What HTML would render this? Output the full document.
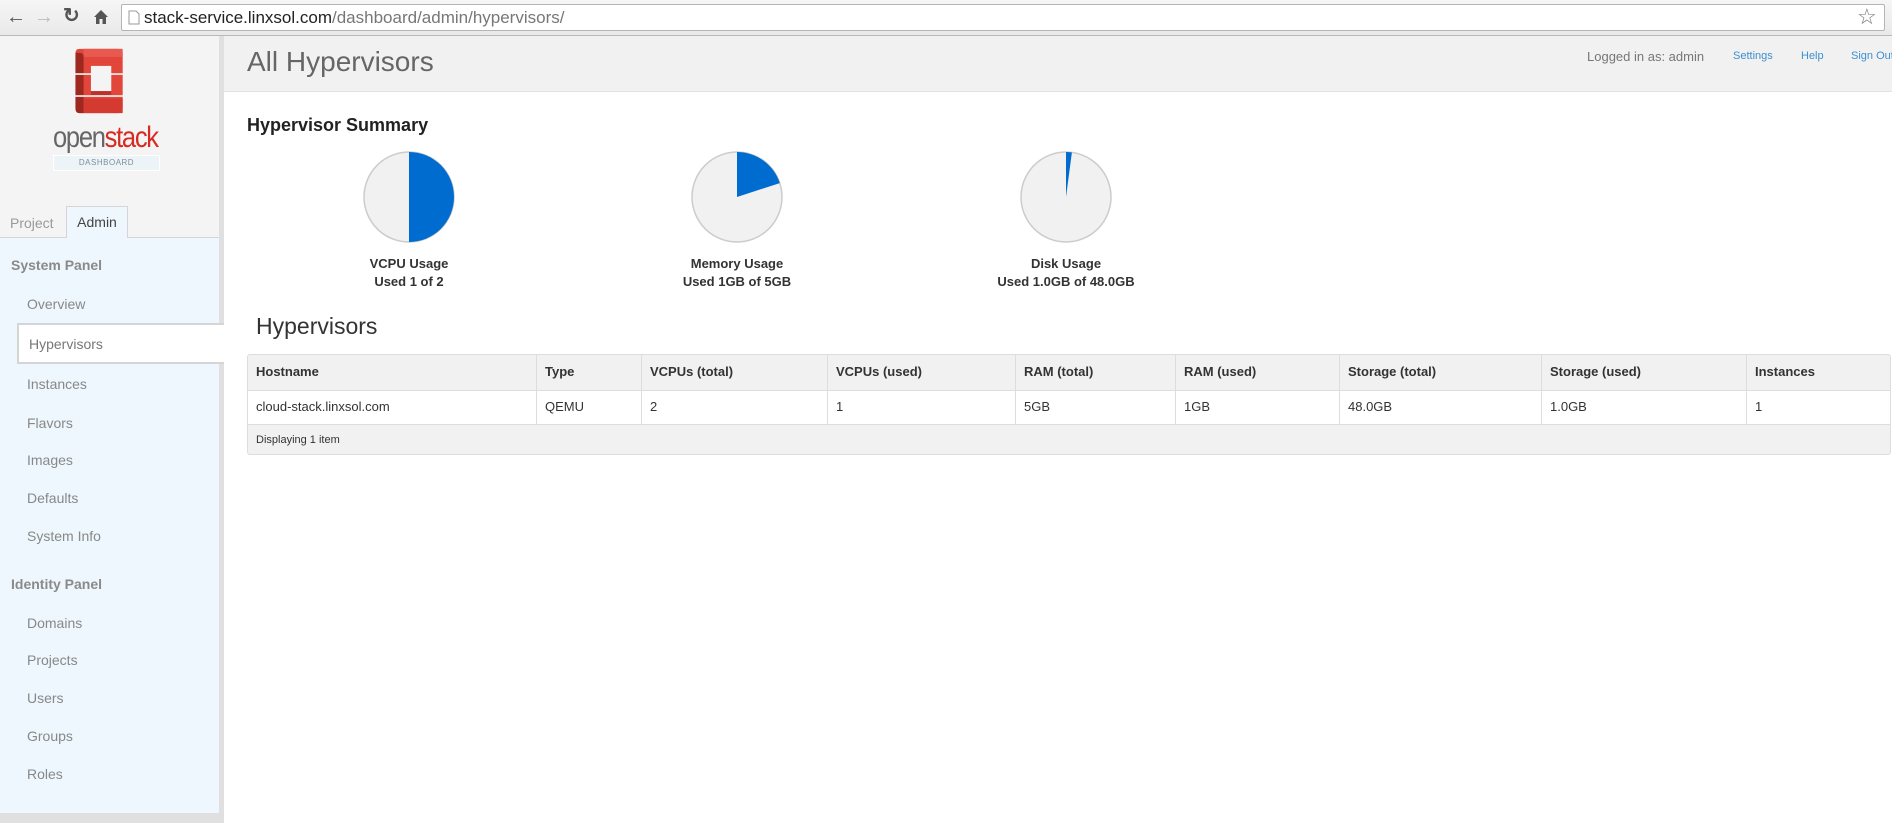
<!DOCTYPE html>
<html><head><meta charset="utf-8"><style>
*{margin:0;padding:0;box-sizing:border-box}
body{width:1892px;height:823px;overflow:hidden;font-family:"Liberation Sans",Arial,sans-serif;background:#fff;position:relative;color:#333}
.abs{position:absolute;white-space:nowrap}
.chrome{left:0;top:0;width:1892px;height:36px;background:linear-gradient(#f6f6f6,#e9e9e9);border-bottom:1px solid #b8b8b8}
.url{left:121px;top:4px;width:1764px;height:27px;background:#fff;border:1px solid #b5b5b5;border-radius:2px;font-size:17px;line-height:25px;padding-left:22px;color:#222}
.url span{color:#777}
.side{left:0;top:36px;width:219px;height:787px;background:#f4f4f4}
.sideblue{left:0;top:237px;width:219px;height:578px;background:#edf7fd;border-top:1px solid #d5d5d5}
.sideborder{left:219px;top:36px;width:5px;height:787px;background:#e0e0e0}
.hdr{left:224px;top:36px;width:1668px;height:56px;background:#f1f1f1;border-bottom:1px solid #e2e2e2}
.nav{font-size:14px;color:#888;left:27px}
.sec{font-size:14px;font-weight:bold;color:#8a8a8a;left:11px}
.th{font-size:13px;font-weight:bold;color:#333}
.td{font-size:13px;color:#333}
.lbl{font-size:13px;font-weight:bold;color:#333;text-align:center;width:200px;line-height:18px}
</style></head><body>
<div class="abs chrome"></div>
<div class="abs" style="left:6px;top:7px;font-size:20px;color:#555;line-height:20px">&#8592;</div>
<div class="abs" style="left:34px;top:7px;font-size:20px;color:#bbb;line-height:20px">&#8594;</div>
<div class="abs" style="left:63px;top:6px;font-size:20px;color:#555;line-height:20px;font-weight:bold">&#8635;</div>
<svg class="abs" style="left:93px;top:9px" width="16" height="16" viewBox="0 0 16 16"><path d="M1 8 L8 1 L15 8 H13 V15 H9.5 V10 H6.5 V15 H3 V8Z" fill="#555"/></svg>
<div class="abs url">stack-service.linxsol.com<span>/dashboard/admin/hypervisors/</span></div>
<svg class="abs" style="left:128px;top:10px" width="12" height="15"><path d="M1 1H8L11 4V14H1Z" fill="#fff" stroke="#999"/></svg>
<div class="abs" style="left:1857px;top:4px;font-size:22px;color:#777">&#9734;</div>

<div class="abs side"></div>
<div class="abs sideblue"></div>
<div class="abs sideborder"></div>
<!-- logo -->
<svg class="abs" style="left:64px;top:48px" width="62" height="70" viewBox="0 0 76 86">
<path d="M14 6 Q14 1 19 1 H66 Q72 1 72 6 V74 Q72 80 66 80 H19 Q14 80 14 74Z" fill="#e2463a"/>
<path d="M14 6 V74 Q14 80 19 80 H24 V10 Q24 6 19 6Z" fill="#9e2820"/>
<rect x="33" y="22" width="25" height="31" fill="#f4f4f4"/>
<rect x="33" y="53" width="25" height="5" fill="#b9332a"/>
<rect x="14" y="31" width="58" height="2" fill="#f4f4f4"/>
<rect x="14" y="58" width="58" height="2" fill="#f4f4f4"/>
<rect x="24" y="62" width="48" height="18" fill="#d43a2f"/>
<rect x="24" y="1" width="48" height="10" fill="#e85a4f"/>
</svg>
<div class="abs" style="left:53px;top:121px;font-size:30px;letter-spacing:-1.5px;transform:scaleX(0.85);transform-origin:left;line-height:34px"><span style="color:#666">open</span><span style="color:#d72b22">stack</span></div>
<div class="abs" style="left:53px;top:155px;width:107px;height:16px;background:#edf4f8;border:1px solid #fff;font-size:8px;color:#7d8e99;text-align:center;line-height:14px;letter-spacing:0.5px">DASHBOARD</div>
<!-- tabs -->
<div class="abs" style="left:10px;top:215px;font-size:14px;color:#999">Project</div>
<div class="abs" style="left:66px;top:206px;width:62px;height:32px;background:#edf7fd;border:1px solid #d5d5d5;border-bottom:none;font-size:14px;color:#444;text-align:center;line-height:30px">Admin</div>
<div class="abs sec" style="top:257px">System Panel</div>
<div class="abs nav" style="top:296px">Overview</div>
<div class="abs" style="left:17px;top:323px;width:207px;height:41px;background:#fff;border:2px solid #d5d5d5;border-right:none"></div>
<div class="abs nav" style="left:29px;top:336px;color:#777">Hypervisors</div>
<div class="abs nav" style="top:376px">Instances</div>
<div class="abs nav" style="top:415px">Flavors</div>
<div class="abs nav" style="top:452px">Images</div>
<div class="abs nav" style="top:490px">Defaults</div>
<div class="abs nav" style="top:528px">System Info</div>
<div class="abs sec" style="top:576px">Identity Panel</div>
<div class="abs nav" style="top:615px">Domains</div>
<div class="abs nav" style="top:652px">Projects</div>
<div class="abs nav" style="top:690px">Users</div>
<div class="abs nav" style="top:728px">Groups</div>
<div class="abs nav" style="top:766px">Roles</div>
<div class="abs" style="left:0;top:813px;width:224px;height:10px;background:#e0e0e0"></div>

<div class="abs hdr"></div>
<div class="abs" style="left:247px;top:45px;font-size:28px;color:#666;line-height:34px">All Hypervisors</div>
<div class="abs" style="left:1587px;top:49px;font-size:13px;color:#777">Logged in as: admin</div>
<div class="abs" style="left:1733px;top:50px;font-size:11px;color:#3d8fd1">Settings</div>
<div class="abs" style="left:1801px;top:50px;font-size:11px;color:#3d8fd1">Help</div>
<div class="abs" style="left:1851px;top:50px;font-size:11px;color:#3d8fd1">Sign Out</div>

<div class="abs" style="left:247px;top:115px;font-size:18px;font-weight:bold;color:#222">Hypervisor Summary</div>
<svg class="abs" style="left:355px;top:145px" width="110" height="106">
<ellipse cx="54" cy="52" rx="45" ry="45" fill="#f1f1f1" stroke="#ccc" stroke-width="1.5"/>
<path d="M54 7 A45 45 0 0 1 54 97Z" fill="#006ccf"/>
</svg>
<svg class="abs" style="left:683px;top:145px" width="110" height="106">
<circle cx="54" cy="52" r="45" fill="#f1f1f1" stroke="#ccc" stroke-width="1.5"/>
<path d="M54 52 L54 7 A45 45 0 0 1 96.8 38.1Z" fill="#006ccf"/>
</svg>
<svg class="abs" style="left:1012px;top:145px" width="110" height="106">
<circle cx="54" cy="52" r="45" fill="#f1f1f1" stroke="#ccc" stroke-width="1.5"/>
<path d="M54 52 L54 7 A45 45 0 0 1 59.9 7.4Z" fill="#006ccf"/>
</svg>
<div class="abs lbl" style="left:309px;top:255px">VCPU Usage<br>Used 1 of 2</div>
<div class="abs lbl" style="left:637px;top:255px">Memory Usage<br>Used 1GB of 5GB</div>
<div class="abs lbl" style="left:966px;top:255px">Disk Usage<br>Used 1.0GB of 48.0GB</div>

<div class="abs" style="left:256px;top:313px;font-size:23px;color:#333">Hypervisors</div>
<div class="abs" style="left:247px;top:354px;width:1644px;height:101px;border:1px solid #ddd;border-radius:3px;background:#f1f1f1;overflow:hidden">
  <div class="abs" style="left:0;top:35px;width:1644px;height:35px;background:#fff;border-top:1px solid #ddd;border-bottom:1px solid #ddd"></div>
</div>
<div class="abs" style="left:536px;top:355px;width:1px;height:69px;background:#ddd"></div>
<div class="abs" style="left:641px;top:355px;width:1px;height:69px;background:#ddd"></div>
<div class="abs" style="left:827px;top:355px;width:1px;height:69px;background:#ddd"></div>
<div class="abs" style="left:1015px;top:355px;width:1px;height:69px;background:#ddd"></div>
<div class="abs" style="left:1175px;top:355px;width:1px;height:69px;background:#ddd"></div>
<div class="abs" style="left:1339px;top:355px;width:1px;height:69px;background:#ddd"></div>
<div class="abs" style="left:1541px;top:355px;width:1px;height:69px;background:#ddd"></div>
<div class="abs" style="left:1746px;top:355px;width:1px;height:69px;background:#ddd"></div>
<div class="abs th" style="left:256px;top:364px">Hostname</div>
<div class="abs th" style="left:545px;top:364px">Type</div>
<div class="abs th" style="left:650px;top:364px">VCPUs (total)</div>
<div class="abs th" style="left:836px;top:364px">VCPUs (used)</div>
<div class="abs th" style="left:1024px;top:364px">RAM (total)</div>
<div class="abs th" style="left:1184px;top:364px">RAM (used)</div>
<div class="abs th" style="left:1348px;top:364px">Storage (total)</div>
<div class="abs th" style="left:1550px;top:364px">Storage (used)</div>
<div class="abs th" style="left:1755px;top:364px">Instances</div>
<div class="abs td" style="left:256px;top:399px">cloud-stack.linxsol.com</div>
<div class="abs td" style="left:545px;top:399px">QEMU</div>
<div class="abs td" style="left:650px;top:399px">2</div>
<div class="abs td" style="left:836px;top:399px">1</div>
<div class="abs td" style="left:1024px;top:399px">5GB</div>
<div class="abs td" style="left:1184px;top:399px">1GB</div>
<div class="abs td" style="left:1348px;top:399px">48.0GB</div>
<div class="abs td" style="left:1550px;top:399px">1.0GB</div>
<div class="abs td" style="left:1755px;top:399px">1</div>
<div class="abs" style="left:256px;top:434px;font-size:11px;color:#333">Displaying 1 item</div>
</body></html>
